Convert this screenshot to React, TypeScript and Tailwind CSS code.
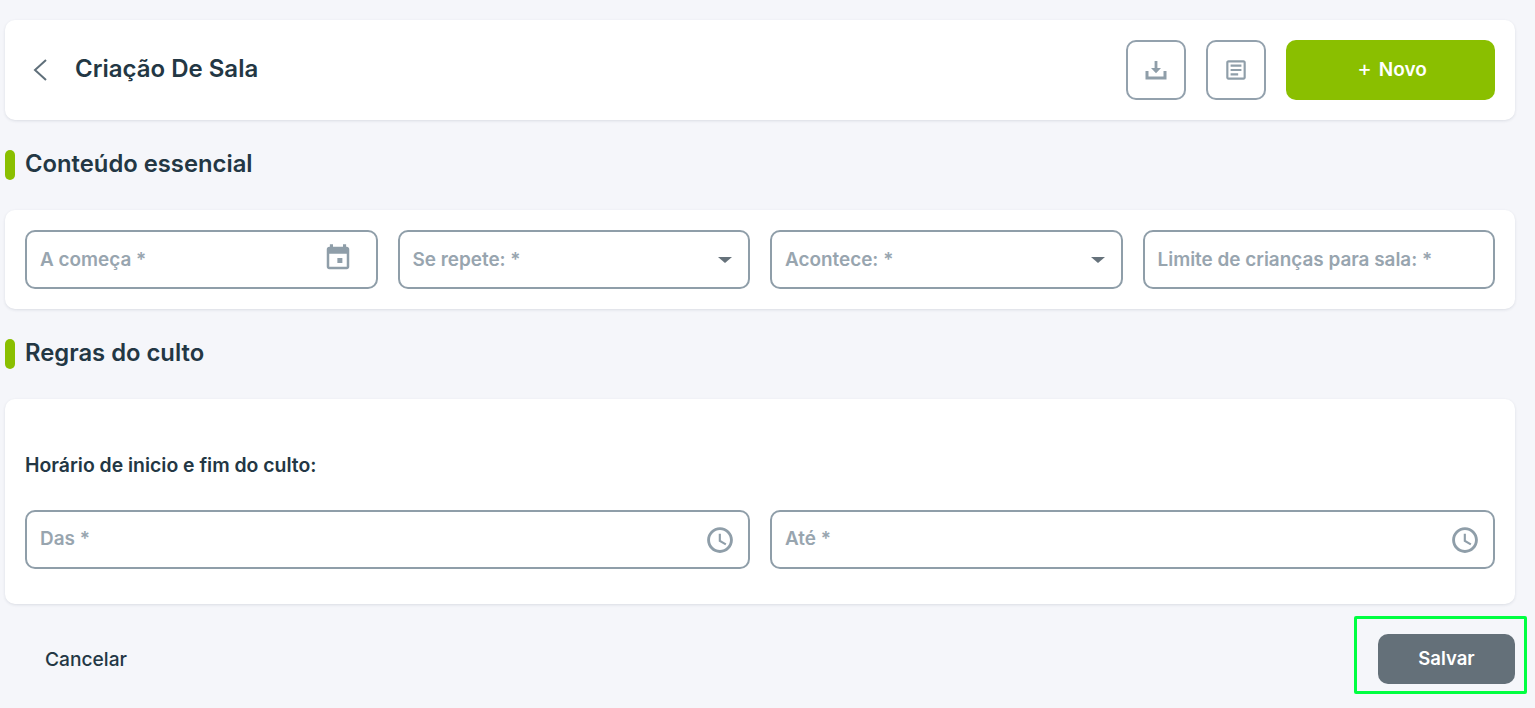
import React from "react";

function Icon({ d, size, className }: { d: string; size: string; className?: string }) {
  return (
    <svg viewBox="0 0 24 24" className={`${size} ${className ?? ""} fill-[#8f9ea9] shrink-0`}>
      <path d={d} />
    </svg>
  );
}

const ARTICLE = "M19 3H5c-1.1 0-2 .9-2 2v14c0 1.1.9 2 2 2h14c1.1 0 2-.9 2-2V5c0-1.1-.9-2-2-2zm0 16H5V5h14v14zM14 17H7v-2h7v2zm3-4H7v-2h10v2zm0-4H7V7h10v2z";
const EVENT = "M15.5 12h-4v4h4v-4zM16 1v2H8V1H5.5v2H5c-1.11 0-1.99.9-1.99 2L3 19c0 1.1.89 2 2 2h14c1.1 0 2-.9 2-2V5c0-1.1-.9-2-2-2h-.5V1H16zm3 18H5V8.5h14V19z";
const CLOCK = "M11.99 1.7C6.3 1.7 1.7 6.3 1.7 12s4.6 10.3 10.29 10.3C17.69 22.300 22.300 17.700 22.300 12S17.690 1.700 11.990 1.700zM12 20c-4.420 0-8-3.580-8-8s3.580-8 8-8 8 3.580 8 8-3.580 8-8 8zm.700-13H11v6.100l5.250 3.150.850-1.400-4.400-2.600z";

function Field({ label, children, textClass = "" }: { label: string; children?: React.ReactNode; textClass?: string }) {
  return (
    <div className="flex-1 min-w-0 h-[59px] flex items-center justify-between rounded-[10px] border-2 border-[#8f9ea9] bg-white px-[13px]">
      <span className={`text-[18.9px] font-semibold text-[#98a5af] truncate ${textClass}`}>{label}</span>
      {children}
    </div>
  );
}

function Caret() {
  return <span className="mr-[3px] w-0 h-0 border-x-[7px] border-x-transparent border-t-[6px] border-t-[#66727b]" />;
}

function Section({ title }: { title: string }) {
  return (
    <div className="flex items-center gap-[10px] h-[30px]">
      <span className="w-[10px] h-[30px] rounded-[5px] bg-[#8abf00]" />
      <h2 className="text-[23.8px] font-semibold text-[#233744] -mt-[2px]">{title}</h2>
    </div>
  );
}

export default function App() {
  return (
    <div className="relative w-[1535px] h-[708px] overflow-hidden bg-[#f5f6fa] pl-[5px] pr-[20px] pt-[20px] font-['Inter',sans-serif]">
      <header className="h-[100px] rounded-[10px] bg-white shadow-[0_1px_3px_rgba(30,50,70,0.12)] flex items-center pl-[27px] pr-[20px]">
        <svg viewBox="0 0 16 24" className="w-[16px] h-[24px] fill-none stroke-[#5f6f7a] stroke-2">
          <path d="M14 2 3 12l11 10" />
        </svg>
        <h1 className="ml-[27px] text-[24px] font-semibold text-[#233744] flex-1 -mt-[2px]">Criação De Sala</h1>
        <div className="flex items-center gap-[20px]">
          <button className="w-[60px] h-[60px] rounded-[10px] border-2 border-[#93a1ad] flex items-center justify-center">
            <svg viewBox="0 0 24 24" className="w-[24px] h-[24px] fill-[#8f9ea9]">
              <path d="M10.6 3h2.8v7h3.6L12 15.2 7 10h3.6V3zM1.5 13h3v5.500h15V13h3v8.500h-21V13z" />
            </svg>
          </button>
          <button className="w-[60px] h-[60px] rounded-[10px] border-2 border-[#93a1ad] flex items-center justify-center">
            <Icon d={ARTICLE} size="w-[26px] h-[26px]" />
          </button>
          <button className="w-[209px] h-[60px] rounded-[10px] bg-[#8abf00] pl-[3px] text-white text-[19px] font-semibold">
            <span className="font-normal text-[22px] leading-none mr-[7px]">+</span>Novo
          </button>
        </div>
      </header>

      <div className="mt-[30px]"><Section title="Conteúdo essencial" /></div>

      <section className="mt-[30px] h-[99px] rounded-[10px] bg-white shadow-[0_1px_3px_rgba(30,50,70,0.12)] flex items-center gap-[20px] px-[20px]">
        <Field label="A começa *" textClass="pt-[2px]">
          <Icon d={EVENT} size="w-[30px] h-[30px]" className="mr-[10px] -mt-[3px]" />
        </Field>
        <Field label="Se repete: *" textClass="pt-[2px]"><Caret /></Field>
        <Field label="Acontece: *" textClass="pt-[2px]"><Caret /></Field>
        <Field label="Limite de crianças para sala: *" textClass="pt-[2px]" />
      </section>

      <div className="mt-[30px]"><Section title="Regras do culto" /></div>

      <section className="mt-[30px] h-[205px] rounded-[10px] bg-white shadow-[0_1px_3px_rgba(30,50,70,0.12)] px-[20px] pt-[55px]">
        <p className="text-[19.4px] font-semibold text-[#233744] leading-[22px]">Horário de inicio e fim do culto:</p>
        <div className="mt-[34px] flex gap-[20px]">
          <Field label="Das *"><Icon d={CLOCK} size="w-[30px] h-[30px]" /></Field>
          <Field label="Até *"><Icon d={CLOCK} size="w-[30px] h-[30px]" /></Field>
        </div>
      </section>

      <footer className="mt-[30px] flex items-center justify-between pl-[40px]">
        <span className="text-[19.2px] font-medium text-[#233744]">Cancelar</span>
        <button className="w-[137px] h-[50px] rounded-[10px] bg-[#647079] text-white text-[18.5px] font-semibold">Salvar</button>
      </footer>

      <div className="absolute left-[1354px] top-[616px] w-[173px] h-[78px] border-[3px] border-[#00ff41] rounded-[2px]" />
    </div>
  );
}
